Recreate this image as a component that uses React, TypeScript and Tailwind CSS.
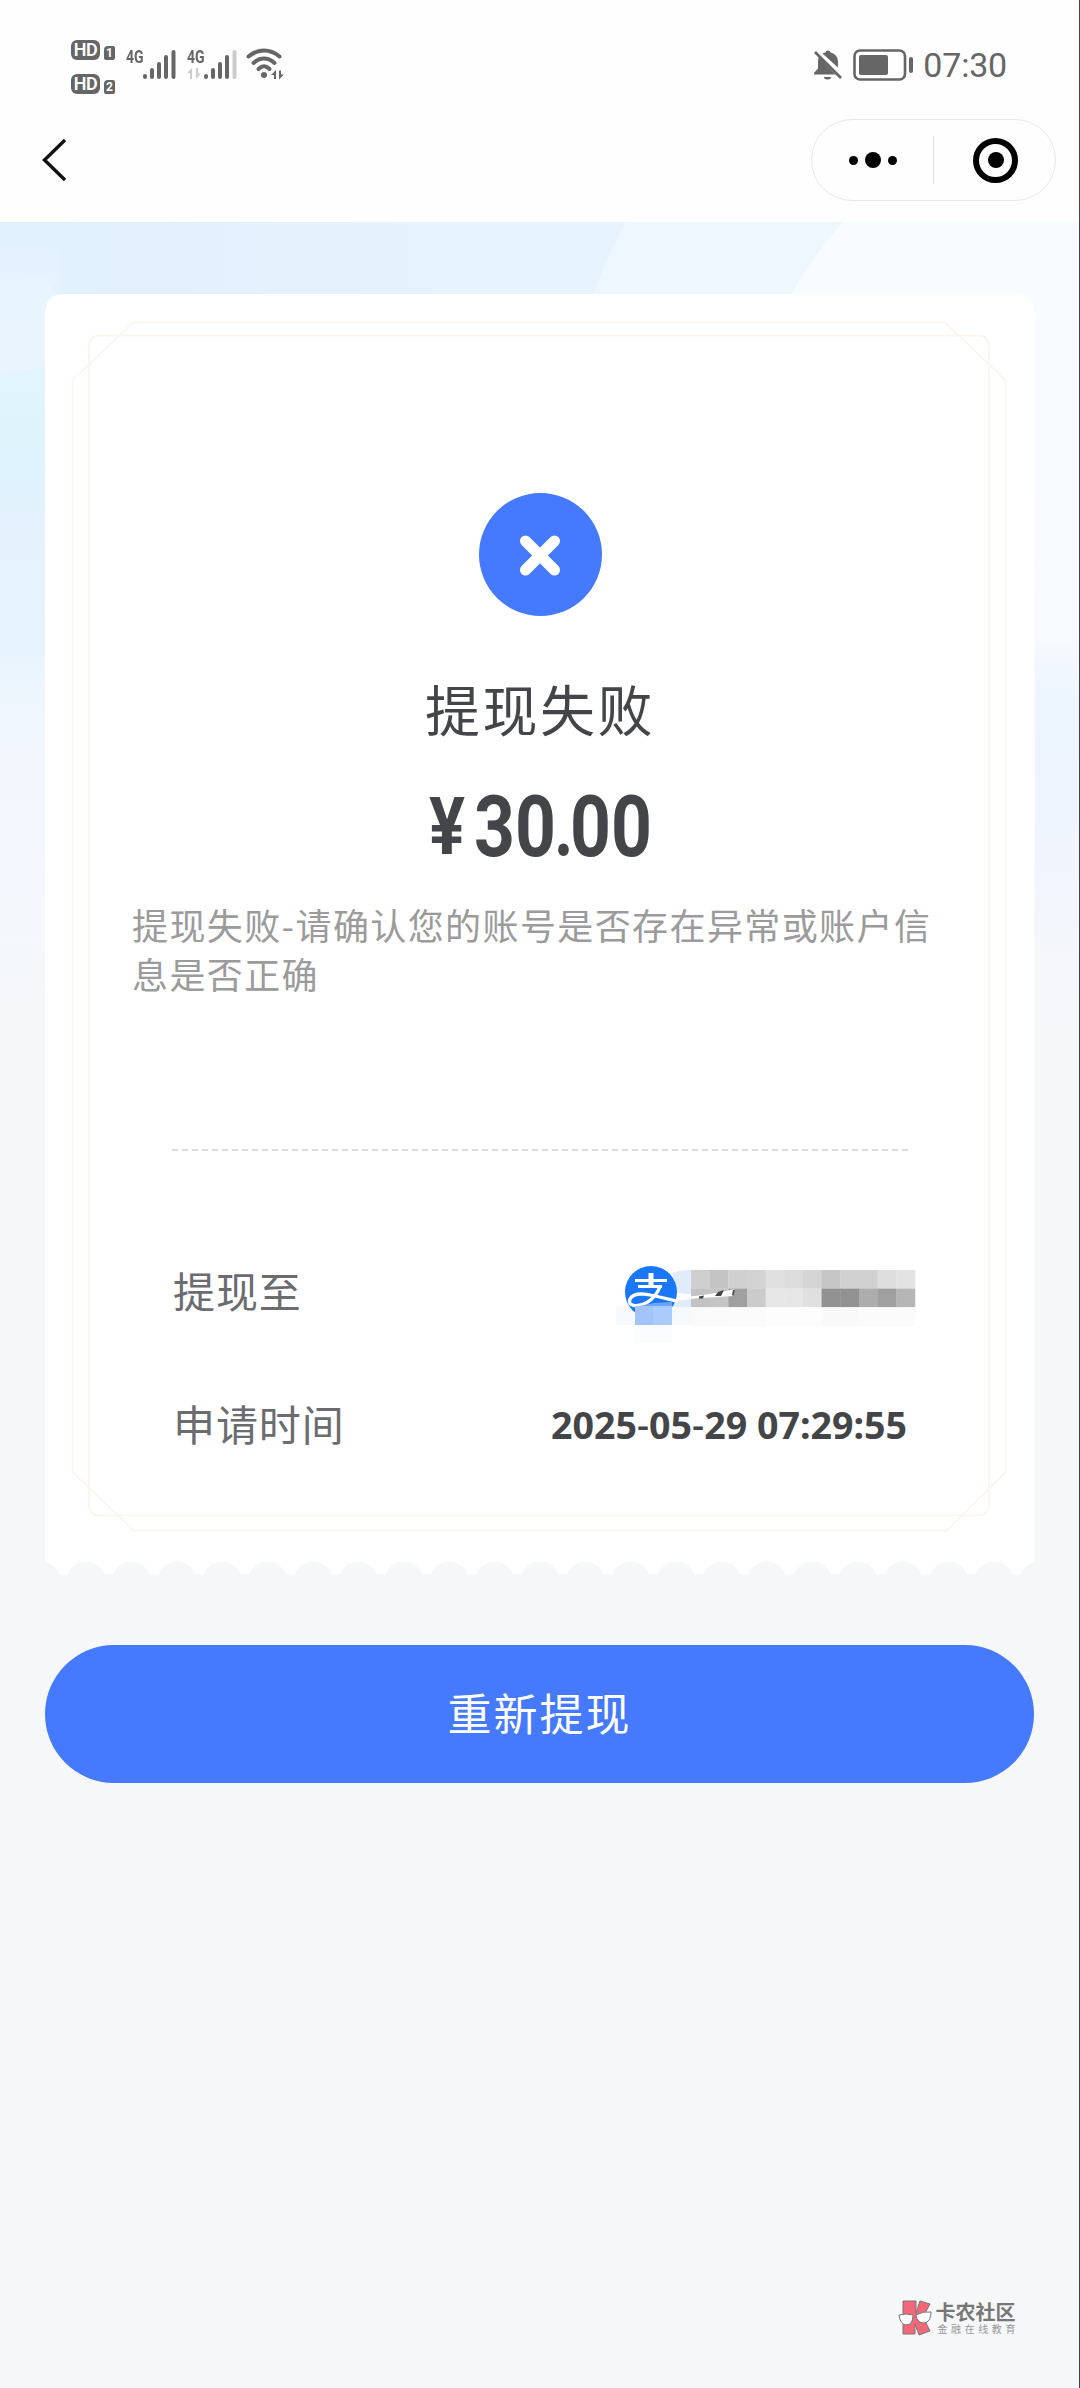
import React from "react";

function HdBadge({ n }: { n: string }) {
  return (
    <div className="flex items-end gap-[4px]">
      <div className="flex h-[20px] w-[29px] items-center justify-center rounded-[6px] bg-[#666] font-['Roboto',sans-serif] text-[18px] leading-[20px] font-semibold tracking-[-0.5px] text-white">
        HD
      </div>
      <div className="flex h-[14px] w-[11px] items-center justify-center rounded-[2px] rounded-tl-[4px] bg-[#666] font-['Roboto',sans-serif] text-[12px] leading-[14px] font-bold text-white">
        {n}
      </div>
    </div>
  );
}

function Signal({ weak }: { weak?: boolean }) {
  return (
    <div className="relative h-[32px] w-[51px]">
      <svg width="51" height="32" viewBox="0 0 51 32">
        <g stroke="#666" strokeWidth="4" strokeLinecap="round">
          <path d="M19 27v1M26 21v7M33 15v13M40 8v20" />
          <path d="M47.500 3v25" stroke={weak ? "#ccc" : "#666"} />
        </g>
        {weak && <path d="M0 24 5 19v11H3v-6zM14 24.500 9 30V19h2v5.500z" fill="#ccc" />}
      </svg>
      <span className="absolute -top-[3px] left-0 origin-left scale-x-[0.780] font-['Roboto',sans-serif] text-[18px] leading-[21px] font-bold text-[#666]">
        4G
      </span>
    </div>
  );
}

function Wifi() {
  return (
    <svg width="38" height="34" viewBox="0 0 38 34" fill="none">
      <g stroke="#666" strokeWidth="4" strokeLinecap="round">
        <path d="M2.500 9.500C12 1.500 24 1.500 33.500 9.500" />
        <path d="M7.500 16C14 10 22 10 28.500 16" />
        <path d="M12.500 22C16 18.500 20 18.500 23.500 22" />
      </g>
      <circle cx="18" cy="28" r="3" fill="#666" />
      <path d="M25 28l5-5v9h-2v-4zM38 27.500 33 32.500v-9h2v4z" fill="#666" />
    </svg>
  );
}

function StatusBar() {
  return (
    <div className="flex h-[104px] items-start justify-between pr-[73px] pl-[71px]">
      <div className="flex items-start">
        <div className="flex flex-col gap-[14px] pt-[40px]">
          <HdBadge n="1" />
          <HdBadge n="2" />
        </div>
        <div className="flex gap-[10px] pt-[49px] pl-[11px]">
          <Signal />
          <Signal weak />
          <div className="-mt-[2px] -ml-[2px]"><Wifi /></div>
        </div>
      </div>
      <div className="flex items-center pt-[45px]">
        <svg width="30" height="32" viewBox="0 0 30 32" className="mr-[10px]">
          <path d="M15 1.500a2.500 2.500 0 0 1 2.500 2C22 4.500 25 8 25 13v5.500L9.500 4.500Q11 3.700 12.500 3.500A2.500 2.500 0 0 1 15 1.500zM6 8 22.500 25.500H1V24l4-4.500v-7Q5 10 6 8zM11 28h7a3.500 2.500 0 0 1-7 0z" fill="#666" />
          <path d="M2 3 28 29" stroke="#666" strokeWidth="2.600" />
        </svg>
        <svg width="61" height="32" viewBox="0 0 61 32" className="mr-[9px]">
          <rect x="1.500" y="1.500" width="50.500" height="29" rx="5.500" fill="none" stroke="#666" strokeWidth="2.600" />
          <rect x="6" y="6" width="29" height="20" rx="2" fill="#666" />
          <rect x="56" y="8" width="4" height="16" rx="2" fill="#666" />
        </svg>
        <span className="font-['Roboto',sans-serif] text-[34px] leading-[40px] tracking-[-0.2px] text-[#666]">07:30</span>
      </div>
    </div>
  );
}

function NavBar() {
  return (
    <div className="flex h-[118px] items-start justify-between pr-[24px] pl-[40px]">
      <svg width="30" height="48" viewBox="0 0 30 48" fill="none" className="mt-[32px]">
        <path d="M25 4 4.500 24 25 44" stroke="#111" strokeWidth="3.400" />
      </svg>
      <div className="mt-[15px] flex h-[82px] w-[245px] items-center rounded-full border border-[#e8e8e8]">
        <div className="flex w-[121px] items-center justify-center gap-[7px]">
          <i className="size-[9px] rounded-full bg-black" />
          <i className="size-[16px] rounded-full bg-black" />
          <i className="size-[9px] rounded-full bg-black" />
        </div>
        <div className="h-[48px] w-px bg-[#e0e0e0]" />
        <div className="flex flex-1 items-center justify-center pr-[1px] pl-[3px]">
          <div className="flex size-[45px] items-center justify-center rounded-full border-[6px] border-black">
            <i className="size-[16px] rounded-full bg-black" />
          </div>
        </div>
      </div>
    </div>
  );
}

function Backdrop() {
  return (
    <svg className="absolute inset-x-0 top-0" width="1080" height="860" viewBox="0 0 1080 860">
      <defs>
        <linearGradient id="left" x1="0" y1="0" x2="0" y2="860" gradientUnits="userSpaceOnUse">
          <stop offset="0" stopColor="#e0f0fe" />
          <stop offset="0.070" stopColor="#e8f4fe" />
          <stop offset="0.170" stopColor="#e9f4fe" />
          <stop offset="0.200" stopColor="#e0f4fd" />
          <stop offset="0.290" stopColor="#def3fd" />
          <stop offset="0.350" stopColor="#e4f2fe" />
          <stop offset="0.500" stopColor="#e8f4fd" />
          <stop offset="0.580" stopColor="#f1f7fe" />
          <stop offset="0.760" stopColor="#f4f8fe" />
          <stop offset="0.920" stopColor="#f5f7f9" />
          <stop offset="1" stopColor="#f5f7f9" />
        </linearGradient>
        <linearGradient id="top" x1="0" y1="0" x2="1" y2="0">
          <stop offset="0" stopColor="#e2f1fe" />
          <stop offset="0.550" stopColor="#e6f2fe" />
          <stop offset="1" stopColor="#e6f2fe" />
        </linearGradient>
        <linearGradient id="right" x1="0" y1="0" x2="0" y2="860" gradientUnits="userSpaceOnUse">
          <stop offset="0" stopColor="#f8fbff" />
          <stop offset="0.480" stopColor="#f7fafe" />
          <stop offset="0.550" stopColor="#edf5fe" />
          <stop offset="0.670" stopColor="#eef5fe" />
          <stop offset="0.760" stopColor="#f1f5fd" />
          <stop offset="0.860" stopColor="#f5f7fa" />
          <stop offset="1" stopColor="#f5f7f9" />
        </linearGradient>
      </defs>
      <rect width="60" height="860" fill="url(#left)" />
      <path d="M0 50Q60 40 60 100V0H0z" fill="#e2f1fe" opacity="0.500" />
      <path d="M0 157Q25 146 60 142V165H0z" fill="#e2f4fd" />
      <rect x="60" width="700" height="100" fill="url(#top)" />
      <path d="M625 0H900V90H588Q603 40 625 0z" fill="#eef6fe" />
      <path d="M843 0H1080V860H1020V90H782Q808 38 843 0z" fill="url(#right)" />
    </svg>
  );
}

const TEETH = Array.from({ length: 23 }, (_, i) => -4.400 + i * 45.400);

function TicketBackground() {
  return (
    <svg className="absolute inset-0" width="990" height="1281" viewBox="0 0 990 1281" fill="none">
      <defs>
        <mask id="teeth">
          <path d="M0 20Q0 0 20 0H969.500Q989.500 0 989.500 20V1280.500H0z" fill="#fff" />
          {TEETH.map((x) => (
            <circle key={x} cx={x} cy="1287" r="19.500" fill="#000" />
          ))}
        </mask>
      </defs>
      <rect width="990" height="1281" fill="#fff" mask="url(#teeth)" />
      <g stroke="#faf7f2" strokeWidth="2">
        <path d="M88 28.500H900L960.500 86V1178L902 1236.500H89L27.500 1178V86z" />
        <rect x="44" y="41.500" width="900" height="1180" rx="10" />
      </g>
    </svg>
  );
}

const MOSAIC = [
  ["#cfcfcf", "#c4c4c6", "#d0d0d0", "#d3d3d3", "#e0e0e0", "#dcdcdc", "#d5d5d5", "#c6c6c6", "#d1d1d1", "#d1d1d1", "#dedede", "#e3e3e3"],
  ["#c3c3c3", "#c5c5c5", "#a0a0a0", "#cbcbcb", "#e6e6e6", "#e6e6e6", "#e0e0e0", "#919191", "#919191", "#adadad", "#a0a0a0", "#b6b6b6"],
  ["#fafafa", "#fafafa", "#fbfbfb", "#fbfbfb", "#fdfdfd", "#fdfdfd", "#fdfdfd", "#f9f9f9", "#f9f9f9", "#fbfbfb", "#fbfbfb", "#fbfbfb"],
];

function Account() {
  return (
    <svg width="314" height="78" viewBox="0 0 314 78">
      <rect x="0" y="40" width="75" height="19" fill="#f6f9fe" />
      <path d="M56 8Q60 4 75 4V41H19V38Q40 37 62 32L61 22z" fill="#e0ecfb" />
      <path d="M58 26Q68 28 75 28V33L57 35z" fill="#fff" />
      <circle cx="35" cy="26" r="26" fill="#1a78f8" />
      <g stroke="#fff" fill="none">
        <path d="M19 14.500H51M22 20.500H46" strokeWidth="3" />
        <path d="M35 7V20" strokeWidth="5" />
        <path d="M44 20.500Q40 31 31 36.500C21 42 11 40 14 33 19 24 34 28.500 62 35.500" strokeWidth="3.400" />
      </g>
      <path d="M19 41 38 37 56 36V41z" fill="#6ba3fa" />
      <rect x="19" y="40" width="18.500" height="19" fill="#a3c4fa" />
      <rect x="37" y="40" width="19" height="19" fill="#aaccfc" />
      <rect x="19" y="59" width="37" height="18" fill="#fafcff" />
      {MOSAIC.map((row, r) =>
        row.map((fill, c) => (
          <rect key={`${r}-${c}`} x={75 + c * 18.660} y={4 + r * 18.600} width="19" height="18.800" fill={fill} />
        )),
      )}
      <path d="M62 31Q90 30 119 23L117 30 85 32 62 34z" fill="#fff" />
      <path d="M83 30.500l5-1-1 3h-4zM102 26l6-2-3 6h-6zM117 24l2-.5-1.500 6h-1.500z" fill="#444" />
    </svg>
  );
}

function Watermark() {
  return (
    <div className="flex items-start gap-[3px]">
      <svg width="34" height="36" viewBox="0 0 34 36" stroke="#777" strokeWidth="1">
        <path d="M5 1H18V13L22 1 32 4 25 17 32 31 21 35 17 24V34H5z" fill="#f2687a" />
        <path d="M1 15Q8 13 15 15 15 25 8 25 2 24 1 15zM18 15Q25 11 33 12 33 22 26 23 19 23 18 15z" fill="#fff" />
      </svg>
      <div className="flex flex-col pt-[1px]">
        <span className="text-[20px] leading-[22px] font-bold text-[#777]">卡农社区</span>
        <span className="pl-[2px] text-[10px] leading-[12px] tracking-[3.600px] text-[#999]">金融在线教育</span>
      </div>
    </div>
  );
}

export default function App() {
  return (
    <div className="relative flex h-[2388px] w-[1080px] flex-col overflow-hidden bg-[#f5f7f9] font-['Noto_Sans_CJK_SC',sans-serif]">
      <header className="bg-[#fefefe]">
        <StatusBar />
        <NavBar />
      </header>

      <main className="relative flex-1 px-[45px] pt-[72px]">
        <Backdrop />
        <section className="relative h-[1281px] w-[990px]">
          <TicketBackground />
          <div className="relative flex h-full flex-col items-center pt-[199px]">
            <div className="flex size-[123px] items-center justify-center rounded-full bg-[#457afe]">
              <svg width="42" height="42" viewBox="0 0 42 42" stroke="#fff" strokeWidth="11" strokeLinecap="round">
                <path d="M6.500 7 35.500 36M35.500 7 6.500 36" />
              </svg>
            </div>
            <h1 className="mt-[51px] text-[55px] leading-[80px] tracking-[2.500px] text-[#444548]">提现失败</h1>
            <div className="mt-[37px] flex h-[86px] w-[222px] items-center font-['Roboto',sans-serif] leading-[86px] font-bold text-[#444548]">
              <span className="w-[48px] origin-left scale-x-[0.840] text-[80px]">¥</span>
              <span className="w-[81px] origin-left scale-x-[0.830] text-[86px]">30</span>
              <span className="w-[15px] origin-left -translate-x-[1px] scale-x-[0.780] text-[86px]">.</span>
              <span className="w-[81px] origin-left scale-x-[0.830] text-[86px]">00</span>
            </div>
            <p className="mt-[30px] ml-[87px] w-[815px] self-start text-[36px] leading-[49px] tracking-[1.400px] text-[#9b9b9b]">
              提现失败-请确认您的账号是否存在异常或账户信息是否正确
            </p>
            <div className="mt-auto mb-[112px] h-[2px] w-[736px] bg-[repeating-linear-gradient(90deg,#dcdcdc_0_6px,transparent_6px_10px)]" />
            <div className="mb-[74px] flex h-[60px] w-[736px] items-center justify-between">
              <span className="-mt-[7px] pl-[1px] text-[42px] leading-[60px] tracking-[0.900px] text-[#6b6c70]">提现至</span>
              <div className="-mr-[22px] h-[54px]"><Account /></div>
            </div>
            <div className="mb-[118px] flex h-[60px] w-[736px] items-center justify-between">
              <span className="-mt-[9px] pl-[1px] text-[42px] leading-[60px] tracking-[0.900px] text-[#6b6c70]">申请时间</span>
              <span className="-mt-[5px] pr-[1px] font-['Noto_Sans',sans-serif] text-[37.600px] leading-[60px] font-bold text-[#444548]">
                2025<span className="font-medium">-</span>05<span className="font-medium">-</span>29 07:29:55
              </span>
            </div>
          </div>
        </section>

        <button className="relative mt-[70px] h-[138px] w-[989px] rounded-full bg-[#457afe] pb-[5px] text-[44px] leading-[60px] tracking-[2px] text-white">
          重新提现
        </button>
      </main>

      <footer className="flex h-[92px] items-start justify-end pt-[4px] pr-[61px]">
        <Watermark />
      </footer>
      <div className="absolute inset-y-0 right-0 w-px bg-[#444]" />
    </div>
  );
}
